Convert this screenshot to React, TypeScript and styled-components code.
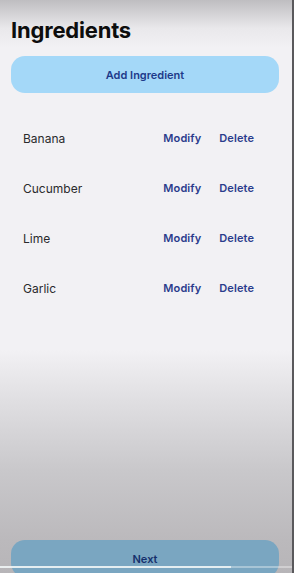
import styled, { createGlobalStyle } from 'styled-components';

const GlobalStyle = createGlobalStyle`
  html, body {
    margin: 0;
    padding: 0;
    overflow: hidden;
  }
  body {
    font-family: Inter, "Noto Sans", "Liberation Sans", sans-serif;
  }
`;

const ingredients = ['Banana', 'Cucumber', 'Lime', 'Garlic'];

const Screen = styled.div`
  position: relative;
  box-sizing: border-box;
  height: 573px;
  width: 294px;
  display: flex;
  flex-direction: column;
  padding: 0 13px 0 11px;
  overflow: hidden;
  background: linear-gradient(
    to bottom,
    #bfbec1 0px,
    #e9e8eb 28px,
    #f2f1f4 48px,
    #f2f1f4 350px,
    #e0dfe2 400px,
    #c9c8cb 470px,
    #bbb9bc 540px,
    #b7b5b8 573px
  );
  border-right: 2px solid #5a595c;
`;

const Title = styled.h1`
  margin: 17px 0 0;
  font-size: 22px;
  line-height: 26px;
  font-weight: 700;
  color: #0d0d0d;
  letter-spacing: -0.2px;
`;

const PillButton = styled.button<{ $dim?: boolean }>`
  width: 100%;
  height: 37px;
  border: none;
  border-radius: 14px;
  background: ${(p) => (p.$dim ? '#7aa6c1' : '#a4d8f8')};
  color: ${(p) => (p.$dim ? '#15306c' : '#1e3a8a')};
  font-family: inherit;
  font-size: 11px;
  font-weight: 600;
  cursor: pointer;
`;

const AddButton = styled(PillButton)`
  margin-top: 13px;
`;

const List = styled.ul`
  list-style: none;
  margin: 20px 0 0;
  padding: 0;
`;

const Row = styled.li`
  height: 50px;
  display: flex;
  align-items: center;
  padding: 0 25px 0 12px;
`;

const Name = styled.span`
  flex: 1;
  font-size: 12px;
  color: #2a2a2c;
`;

const Actions = styled.div`
  display: flex;
  gap: 18px;
`;

const LinkButton = styled.button`
  border: none;
  background: none;
  padding: 0;
  font-family: inherit;
  font-size: 11px;
  font-weight: 600;
  letter-spacing: 0.1px;
  color: #2b3c8c;
  cursor: pointer;
`;

const Footer = styled.div`
  margin-top: auto;
  margin-bottom: -4px;
`;

const Scrubber = styled.div`
  position: absolute;
  left: 0;
  right: 0;
  bottom: 5px;
  height: 2px;
  background: rgba(255, 255, 255, 0.35);
`;

const ScrubberFill = styled.div`
  height: 100%;
  background: rgba(240, 244, 246, 0.85);
`;

export default function App() {
  const progress = 79;
  return (
    <>
      <GlobalStyle />
      <Screen>
        <Title>Ingredients</Title>
        <AddButton>Add Ingredient</AddButton>
        <List>
          {ingredients.map((item) => (
            <Row key={item}>
              <Name>{item}</Name>
              <Actions>
                <LinkButton>Modify</LinkButton>
                <LinkButton>Delete</LinkButton>
              </Actions>
            </Row>
          ))}
        </List>
        <Footer>
          <PillButton $dim>Next</PillButton>
        </Footer>
        <Scrubber>
          <ScrubberFill style={{ width: `${progress}%` }} />
        </Scrubber>
      </Screen>
    </>
  );
}
